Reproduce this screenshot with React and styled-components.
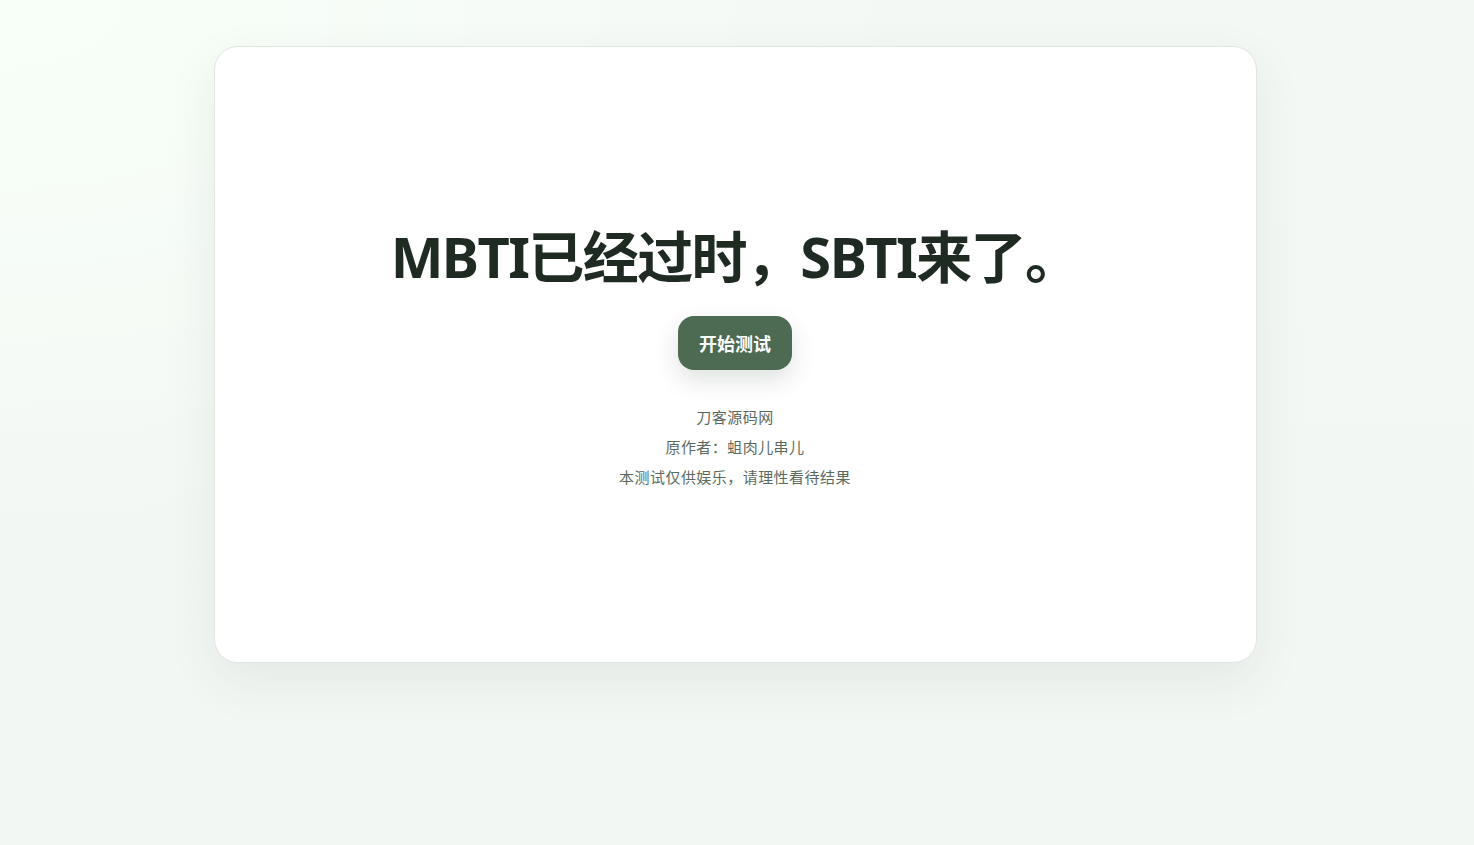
import React from "react";
import styled, { createGlobalStyle } from "styled-components";

const Global = createGlobalStyle`
  html, body { margin: 0; padding: 0; }
  body {
    font-family: "Noto Sans", "Noto Sans CJK SC", sans-serif;
    background: #f3f7f4;
  }
`;

const Page = styled.div`
  min-height: 100vh;
  box-sizing: border-box;
  padding: 46px 22px 46px 18px;
  background:
    radial-gradient(ellipse at 0% 0%, #f8fff8 0%, rgba(248,255,248,0) 45%),
    linear-gradient(180deg, #f4f8f5 0%, #f3f7f4 100%);
  display: flex;
  justify-content: center;
  align-items: flex-start;
`;

const Card = styled.main`
  width: 100%;
  max-width: 1043px;
  min-height: 617px;
  box-sizing: border-box;
  background: #ffffff;
  border: 1px solid #dfe7e1;
  border-radius: 24px;
  box-shadow: 0 18px 50px rgba(40, 70, 50, 0.08);
  display: flex;
  flex-direction: column;
  align-items: center;
  justify-content: center;
  padding: 46px 40px 40px;
`;

const Title = styled.h1`
  margin: 0;
  font-family: "Noto Sans", "Noto Sans CJK SC", sans-serif;
  font-size: 56px;
  font-weight: 700;
  line-height: 1.2;
  color: #1f2b22;
  letter-spacing: -1.6px;
  text-align: center;
`;

const StartButton = styled.button`
  margin-top: 25px;
  border: none;
  background: #4d6a52;
  color: #ffffff;
  font-family: "Noto Sans CJK SC", sans-serif;
  font-size: 18px;
  font-weight: 700;
  line-height: 22px;
  padding: 16px 21px;
  border-radius: 16px;
  box-shadow: 0 10px 24px rgba(30, 50, 35, 0.14);
  cursor: pointer;
`;

const Notes = styled.div`
  margin-top: 32px;
  display: flex;
  flex-direction: column;
  align-items: center;
`;

const Note = styled.p`
  margin: 0;
  font-family: "Noto Sans CJK SC", sans-serif;
  font-size: 15px;
  letter-spacing: 0.45px;
  line-height: 30px;
  color: #5b6a5f;
`;

export default function App() {
  return (
    <>
      <Global />
      <Page>
        <Card>
          <Title>MBTI已经过时，SBTI来了。</Title>
          <StartButton>开始测试</StartButton>
          <Notes>
            <Note>刀客源码网</Note>
            <Note>原作者：蛆肉儿串儿</Note>
            <Note>本测试仅供娱乐，请理性看待结果</Note>
          </Notes>
        </Card>
      </Page>
    </>
  );
}
